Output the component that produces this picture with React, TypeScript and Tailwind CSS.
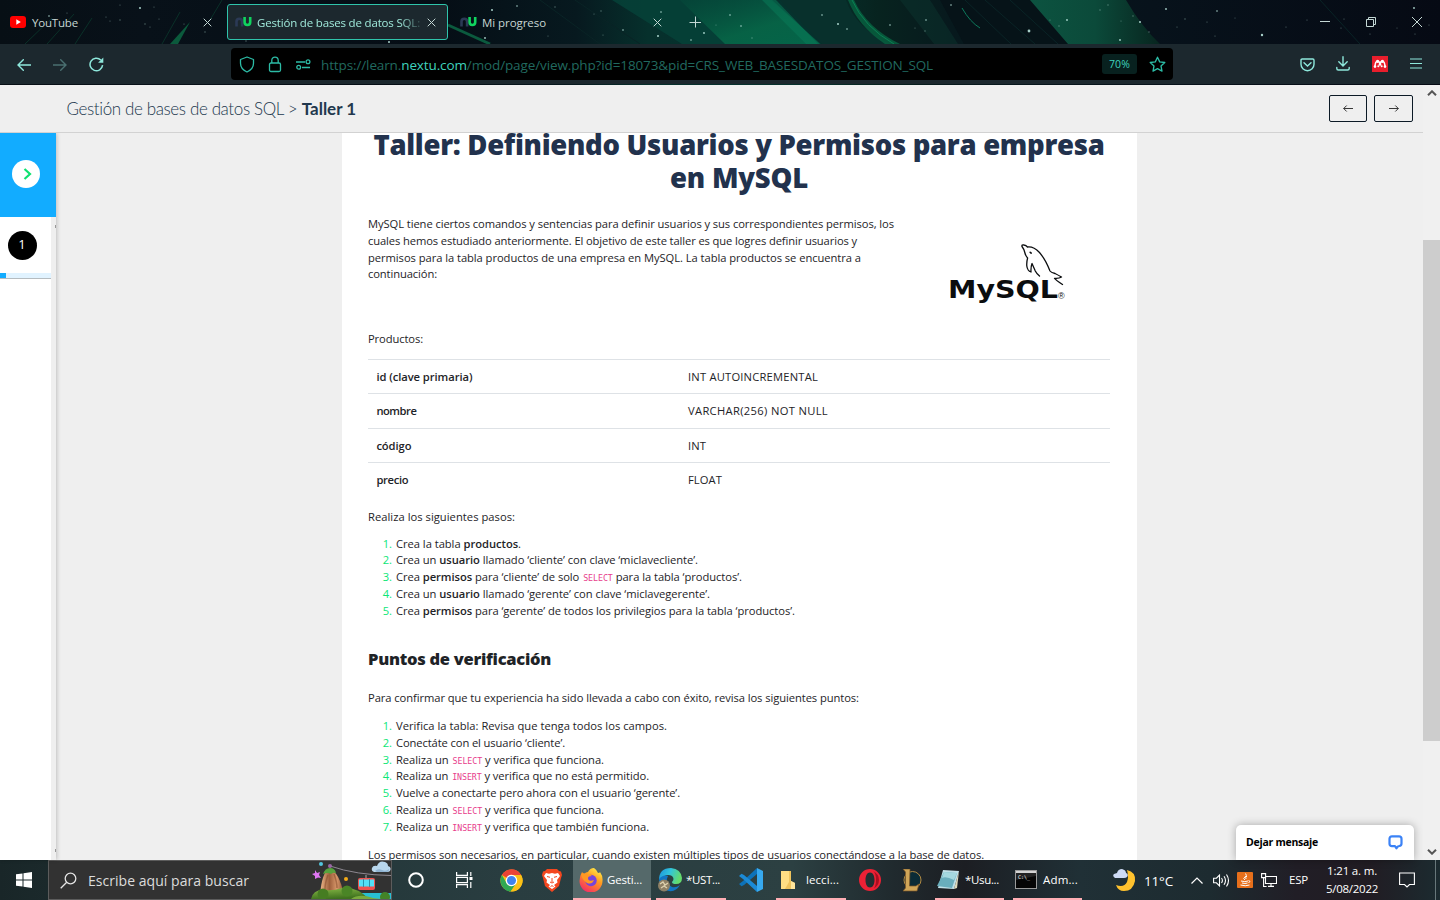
import { useLayoutEffect, useRef, type ReactNode } from 'react';

/** Single line of text whose tracking is computed so that it fills `w` pixels. */
function Fit({ w, className = '', children }: { w: number; className?: string; children: ReactNode }) {
  const ref = useRef<HTMLSpanElement>(null);
  useLayoutEffect(() => {
    const el = ref.current;
    if (!el) return;
    el.style.letterSpacing = '0px';
    const natural = el.getBoundingClientRect().width;
    const n = el.textContent?.length ?? 1;
    el.style.letterSpacing = `${(w - natural) / n}px`;
  }, [w]);
  return (
    <span ref={ref} className={`inline-block whitespace-pre ${className}`}>
      {children}
    </span>
  );
}

const Code = ({ children }: { children: string }) => (
  <code className="pl-px font-['DejaVu_Sans_Mono',monospace] text-[8.3px] text-[#e83e8c]">{children}</code>
);

const stars: [number, number, number][] = [
  [140, 8, 1], [120, 5, 0.6], [106, 17, 0.6], [110, 21, 0.6], [120, 20, 0.7], [145, 24, 0.7], [150, 27, 0.6], [159, 19, 0.6],
  [154, 7, 0.6], [205, 32, 0.7], [49, 16, 0.8], [67, 13, 0.6], [184, 24, 0.6], [389, 42, 1], [246, 41, 0.7], [492, 10, 1],
  [517, 6, 0.8], [555, 7, 0.7], [594, 14, 0.6], [601, 11, 0.7], [485, 38, 0.9], [548, 36, 0.6], [603, 35, 0.6], [623, 30, 0.8],
  [661, 12, 0.8], [658, 36, 1], [691, 40, 0.8], [704, 33, 0.9], [716, 25, 0.6], [730, 15, 0.8], [741, 26, 0.8], [752, 38, 0.7],
  [822, 15, 0.8], [838, 24, 1], [847, 29, 0.8], [890, 25, 0.8], [915, 28, 0.6], [925, 31, 0.7], [926, 20, 0.8], [951, 5, 0.8],
  [1029, 31, 1.4], [1050, 20, 0.6], [1067, 20, 0.9], [1059, 26, 0.7], [1100, 10, 0.7], [1108, 5, 0.7], [1121, 21, 0.6], [1140, 22, 1],
  [1133, 16, 0.7], [1149, 32, 0.7], [1120, 40, 0.9], [1166, 9, 0.9], [1185, 19, 0.7], [1177, 27, 0.6], [1217, 11, 0.8], [1207, 22, 0.6],
  [1262, 35, 1.2], [1215, 36, 0.6], [1286, 27, 0.6], [1307, 20, 0.6], [1344, 19, 0.6], [1341, 28, 0.6], [1414, 8, 0.9], [1397, 28, 0.5],
  [1370, 34, 0.6], [1415, 34, 0.6], [1429, 25, 0.6], [1235, 18, 0.5],
];

const Aurora = () => (
  <svg className="absolute inset-0" width="1440" height="85" viewBox="0 0 1440 85">
    <defs>
      <linearGradient id="sky" x1="0" x2="1440" y1="0" y2="0" gradientUnits="userSpaceOnUse">
        <stop offset="0" stopColor="#070f15" />
        <stop offset=".1" stopColor="#081119" />
        <stop offset=".3" stopColor="#050d15" />
        <stop offset=".4" stopColor="#07191f" />
        <stop offset=".45" stopColor="#06302c" />
        <stop offset=".56" stopColor="#06322e" />
        <stop offset=".61" stopColor="#07231f" />
        <stop offset=".66" stopColor="#07191d" />
        <stop offset=".8" stopColor="#07121b" />
        <stop offset="1" stopColor="#060a14" />
      </linearGradient>
      <linearGradient id="beam" x1="0" x2="1" y1="0" y2="1">
        <stop offset="0" stopColor="#05493a" stopOpacity=".6" />
        <stop offset=".6" stopColor="#076848" />
        <stop offset="1" stopColor="#046b4c" />
      </linearGradient>
      <linearGradient id="ray" x1="0" x2="1" y1="0" y2="0">
        <stop offset="0" stopColor="#0c5340" />
        <stop offset=".5" stopColor="#0b4a3a" />
        <stop offset="1" stopColor="#08251f" />
      </linearGradient>
    </defs>
    <rect width="1440" height="85" fill="url(#sky)" />
    <path d="M612 0H770L821 44H682z" fill="#064238" opacity=".85" />
    <path d="M680 0H772L820 44H725z" fill="url(#beam)" opacity=".85" />
    <path d="M762 0h14l42 44h-12z" fill="#0a7a58" opacity=".55" />
    <path d="M780 0h66q10 28 44 44h-68z" fill="#08302c" />
    <path d="M848 0h6q13 28 46 44h-15Q858 26 848 0z" fill="#076040" opacity=".85" />
    <path d="M852 0q12 27 42 44" stroke="#0a8054" fill="none" />
    <path d="M940 0h92l42 44h-110z" fill="#061318" />
    <path d="M1030 0h96q15 26 34 44h-92z" fill="url(#ray)" />
    <path d="M930 0l28 44h-24L900 0z" fill="#0b332d" opacity=".5" />
    <path d="M962 8q8 14 18 20" stroke="#0d7a5c" fill="none" />
    <path d="M190 22l-12 22h-8z" fill="#0b5a3c" />
    <path d="M222 0l-12 20M180 12l-18 32M52 18L25 44M74 14L47 44M92 18L75 44" stroke="#0a3028" />
    <path d="M448 25l42 19" stroke="#0b5a3e" strokeWidth="3" />
    <path d="M540 0l60 44M575 0l65 44M1010 0l48 44M985 0l50 44M965 0l46 44M1320 0l40 44" stroke="#0a2426" strokeWidth="1" />
    {stars.map(([x, y, r]) => (
      <circle key={`${x}-${y}`} cx={x} cy={y} r={r} fill="#b9e4dc" opacity={r > 0.75 ? 0.9 : 0.45} />
    ))}
  </svg>
);

const NuIcon = () => (
  <svg width="17" height="10" viewBox="0 0 17 10" fill="none" strokeWidth="2.6" className="shrink-0">
    <path d="M1.5 9.5V4.500a2.800 2.800 0 0 1 5.600 0v5" stroke="#2b3a55" />
    <path d="M9.600 0v5.200a2.800 2.800 0 0 0 5.600 0V0" stroke="#10d45f" />
  </svg>
);

const CloseX = ({ className = '' }: { className?: string }) => (
  <svg width="9" height="9" viewBox="0 0 9 9" stroke="#c4d8d5" strokeWidth="1" className={`shrink-0 ${className}`}>
    <path d="M.7.7l7.600 7.600M8.300.7L.7 8.300" />
  </svg>
);

function TabBar() {
  return (
    <div className="relative flex h-11 text-[11.5px] text-[#c6d6d4]">
      <div className="flex w-[227px] items-center pl-2.5">
        <svg width="16" height="12" viewBox="0 0 16 12" className="shrink-0">
          <rect width="16" height="12" rx="3" fill="#f00" />
          <path d="M6.300 3.300v5.400L10.800 6z" fill="#fff" />
        </svg>
        <Fit w={46} className="ml-1.5 mt-0.5">YouTube</Fit>
        <CloseX className="ml-auto mr-[15px]" />
      </div>
      <div className="mt-1 flex h-9 w-[221px] items-center rounded-[3px] border border-[#2fc4ab] bg-[#1c282e] pl-[7px]">
        <NuIcon />
        <div className="ml-[5px] mt-0.5 flex w-[168px] overflow-hidden text-[#9fe8da] [mask-image:linear-gradient(90deg,#000_85%,transparent_100%)]">
          <Fit w={163}>Gestión de bases de datos SQL:</Fit>
        </div>
        <CloseX className="ml-[2px]" />
      </div>
      <div className="flex w-[226px] items-center pl-3">
        <NuIcon />
        <Fit w={64} className="ml-[5px] mt-0.5">Mi progreso</Fit>
        <CloseX className="ml-auto mr-[12px]" />
      </div>
      <div className="flex w-[42px] items-center justify-center">
        <svg width="12" height="12" stroke="#c4d8d5" strokeWidth="1"><path d="M6.500 .5v11M.5 6.500h12" /></svg>
      </div>
      <div className="ml-auto flex items-center pr-[18px]">
        <svg width="10" height="10" stroke="#c4d8d5"><path d="M0 4.500h10" /></svg>
        <svg width="10" height="10" fill="none" stroke="#c4d8d5" className="ml-[36px]">
          <path d="M.5 2.500h7v7h-7zM2.500 2.500v-2h7v7h-2" />
        </svg>
        <svg width="10" height="10" stroke="#c4d8d5" className="ml-[36px]"><path d="M0 0l10 10M10 0L0 10" /></svg>
      </div>
    </div>
  );
}

function Toolbar() {
  return (
    <div className="relative flex h-10 items-center bg-[#1c282e]">
      <svg width="14" height="12" viewBox="0 0 14 12" fill="none" stroke="#8ee8dc" strokeWidth="1.4" className="ml-[17px] mt-px">
        <path d="M14 6H1M6.300.7L1 6l5.300 5.300" strokeLinecap="round" />
      </svg>
      <svg width="14" height="12" viewBox="0 0 14 12" fill="none" stroke="#4a6f70" strokeWidth="1.4" className="ml-[22px] mt-px">
        <path d="M0 6h13M7.700.7L13 6l-5.300 5.300" strokeLinecap="round" />
      </svg>
      <svg width="15" height="15" viewBox="0 0 15 15" fill="none" stroke="#8ee8dc" strokeWidth="1.5" className="ml-[22px] mt-px">
        <path d="M13.600 8.200A6.300 6.300 0 1 1 11.800 3" />
        <path d="M14.300.6v5.200H9.100z" fill="#8ee8dc" stroke="none" />
      </svg>
      <div className="ml-[127px] flex h-8 w-[942px] items-center rounded-[4px] bg-black">
        <svg width="16" height="17" viewBox="0 0 16 17" fill="none" stroke="#2cbca6" strokeWidth="1.3" className="ml-2">
          <path d="M8 1l6.500 2.500v3.800c0 4-2.700 7-6.500 8.700C4.200 14.300 1.500 11.300 1.500 7.300V3.500z" strokeLinejoin="round" />
        </svg>
        <svg width="14" height="17" viewBox="0 0 14 17" fill="none" stroke="#2cbca6" strokeWidth="1.3" className="ml-[13px]">
          <rect x="1.500" y="7" width="11" height="8.500" rx="1.500" />
          <path d="M3.800 7V4.300a3.200 3.200 0 0 1 6.400 0V7" />
        </svg>
        <svg width="15" height="11" viewBox="0 0 15 11" fill="none" stroke="#2cbca6" strokeWidth="1.300" className="ml-[14px]">
          <path d="M0 3h9M6 8.500h8" />
          <circle cx="12" cy="2.700" r="1.900" />
          <circle cx="2.700" cy="8.300" r="1.900" />
        </svg>
        <Fit w={612} className="ml-[10px] mt-0.5 text-[13.5px] text-[#21695f]">
          https://learn.<span className="text-[#3fd3bd]">nextu.com</span>/mod/page/view.php?id=18073&amp;pid=CRS_WEB_BASESDATOS_GESTION_SQL
        </Fit>
        <div className="ml-auto flex h-5 w-[35px] items-center justify-center rounded-[3px] bg-[#08211f] pt-0.5 text-[10.5px] text-[#3fd3bd]">
          <Fit w={21}>70%</Fit>
        </div>
        <svg width="17" height="17" viewBox="0 0 17 17" fill="none" stroke="#2cbca6" strokeWidth="1.300" strokeLinejoin="round" className="ml-[12px] mr-[7px]">
          <path d="M8.500 1.200l2.200 4.700 5.100.6-3.800 3.500 1 5.100-4.500-2.500L4 15.100l1-5.100L1.200 6.500l5.100-.6z" />
        </svg>
      </div>
      <svg width="15" height="14" viewBox="0 0 15 14" fill="none" stroke="#8ee8dc" strokeWidth="1.400" className="ml-[127px] mt-px">
        <path d="M2.200 1h10.600q1.200 0 1.200 1.200v4A6.500 6.500 0 0 1 1 6.200v-4Q1 1 2.200 1z" />
        <path d="M4 4.800l3.500 3.300L11 4.800" strokeLinecap="round" />
      </svg>
      <svg width="14" height="15" viewBox="0 0 14 15" fill="none" stroke="#8ee8dc" strokeWidth="1.400" strokeLinecap="round" className="ml-[21px] -mt-px">
        <path d="M7 .7v9M2.800 5.800L7 9.900l4.200-4.100M.8 11.500v1q0 1.500 1.500 1.500h9.400q1.500 0 1.500-1.500v-1" />
      </svg>
      <svg width="16" height="16" viewBox="0 0 16 16" className="ml-[22px]">
        <rect width="16" height="16" fill="#e81e2c" />
        <path d="M3 10.500Q3.200 5.200 5.500 5.200T8 9q.3-3.800 2.500-3.800T13 10.500" stroke="#fff" strokeWidth="1.500" fill="none" />
        <circle cx="5.600" cy="5.300" r="1.600" fill="#fff" />
        <circle cx="10.400" cy="5.300" r="1.600" fill="#fff" />
        <circle cx="3" cy="10.600" r="1.300" fill="#fff" />
        <circle cx="6.300" cy="10.200" r="1" fill="#fff" />
        <circle cx="9.700" cy="10.200" r="1" fill="#fff" />
        <circle cx="8" cy="8.400" r="1.300" fill="#fff" />
        <circle cx="13" cy="10.600" r="1.300" fill="#fff" />
      </svg>
      <svg width="12" height="11" stroke="#8ee8dc" strokeWidth="1.200" className="ml-[22px] -mt-px"><path d="M0 1h12M0 5.500h12M0 10h12" /></svg>
    </div>
  );
}

const MySqlLogo = () => (
  <svg width="120" height="62" viewBox="0 0 120 62" className="text-[#0b0d0f]">
    <g fill="none" stroke="currentColor" strokeWidth="1.300" strokeLinecap="round" strokeLinejoin="round" transform="translate(5 1)">
      <path d="M84.500 33q-3-2.500-4.200-5l-3.300-7.500q-1.300 3.500-1 8.500-3.500-1-4.200-6-.3-4 .8-8-2-2-2.800-5.500Q69 6 67 3.500 66.500 1.500 69 2q2 .2 3.500 2 6-.8 12 5.500 6 7 10.500 18.500 1 1.500 5 2.500 3 1.500 6.500 3.500-2.500 1.700-7 1.300 1.500 1.800 8 6.200" />
      <path d="M75.200 9.300l1 .8" strokeWidth="1.600" />
    </g>
    <text x="-2" y="56" textLength="110" lengthAdjust="spacingAndGlyphs" fill="currentColor" className="font-['DejaVu_Sans'] text-[25px] font-bold">MySQL</text>
    <text x="108" y="57" fill="currentColor" className="font-['Liberation_Sans'] text-[9px]">®</text>
  </svg>
);

const fields: [string, number, string, number][] = [
  ['id (clave primaria)', 96, 'INT AUTOINCREMENTAL', 130],
  ['nombre', 40, 'VARCHAR(256) NOT NULL', 140],
  ['código', 35, 'INT', 18],
  ['precio', 32, 'FLOAT', 34],
];

const steps: [number, ReactNode][] = [
  [125, <>Crea la tabla <b>productos</b>.</>],
  [302, <>Crea un <b>usuario</b> llamado ‘cliente’ con clave ‘miclavecliente’.</>],
  [346, <>Crea <b>permisos</b> para ‘cliente’ de solo <Code>SELECT</Code> para la tabla ‘productos’.</>],
  [314, <>Crea un <b>usuario</b> llamado ‘gerente’ con clave ‘miclavegerente’.</>],
  [399, <>Crea <b>permisos</b> para ‘gerente’ de todos los privilegios para la tabla ‘productos’.</>],
];

const checks: [number, ReactNode][] = [
  [271, <>Verifica la tabla: Revisa que tenga todos los campos.</>],
  [169, <>Conectáte con el usuario ‘cliente’.</>],
  [208, <>Realiza un <Code>SELECT</Code> y verifica que funciona.</>],
  [253, <>Realiza un <Code>INSERT</Code> y verifica que no está permitido.</>],
  [284, <>Vuelve a conectarte pero ahora con el usuario ‘gerente’.</>],
  [208, <>Realiza un <Code>SELECT</Code> y verifica que funciona.</>],
  [253, <>Realiza un <Code>INSERT</Code> y verifica que también funciona.</>],
];

const Steps = ({ items }: { items: [number, ReactNode][] }) => (
  <ol>
    {items.map(([w, text], i) => (
      <li key={i} className="flex h-[16.8px]">
        <span className="w-[24px] text-right text-[#0be676]">{i + 1}.</span>
        <Fit w={w} className="ml-1">{text}</Fit>
      </li>
    ))}
  </ol>
);

function Article() {
  return (
    <article className="ml-[286px] h-[727px] w-[795px] overflow-hidden bg-white pl-[26px] pr-[27px] text-[11.2px] leading-[16.8px] text-[#1e2327] [&_b]:font-semibold">
      <h1 className="-mt-[5px] flex flex-col items-center text-[27.5px] font-extrabold leading-[33px] text-[#22324d]">
        <Fit w={731}>Taller: Definiendo Usuarios y Permisos para empresa</Fit>
        <Fit w={138}>en MySQL</Fit>
      </h1>
      <div className="mt-[22px] flex h-[115px]">
        <p className="flex w-[582px] flex-col items-start">
          <Fit w={526}>MySQL tiene ciertos comandos y sentencias para definir usuarios y sus correspondientes permisos, los</Fit>
          <Fit w={489}>cuales hemos estudiado anteriormente. El objetivo de este taller es que logres definir usuarios y</Fit>
          <Fit w={493}>permisos para la tabla productos de una empresa en MySQL. La tabla productos se encuentra a</Fit>
          <Fit w={69}>continuación:</Fit>
        </p>
        <div className="pt-[26px]"><MySqlLogo /></div>
      </div>
      <p className="flex h-7"><Fit w={55}>Productos:</Fit></p>
      <div>
        {fields.map(([name, nw, type, tw]) => (
          <div key={name} className="flex h-[34.4px] items-center border-t border-[#dee2e6] pl-[8.4px] pt-px">
            <div className="w-[311.600px]"><Fit w={nw} className="font-semibold">{name}</Fit></div>
            <Fit w={tw}>{type}</Fit>
          </div>
        ))}
      </div>
      <p className="mt-3 flex h-[27px]"><Fit w={147}>Realiza los siguientes pasos:</Fit></p>
      <Steps items={steps} />
      <h2 className="mt-[28px] flex h-[42.500px] text-[16.500px] font-extrabold leading-[21px]"><Fit w={183}>Puntos de verificación</Fit></h2>
      <p className="flex h-7"><Fit w={491}>Para confirmar que tu experiencia ha sido llevada a cabo con éxito, revisa los siguientes puntos:</Fit></p>
      <Steps items={checks} />
      <p className="mt-[11px] flex"><Fit w={616}>Los permisos son necesarios, en particular, cuando existen múltiples tipos de usuarios conectándose a la base de datos.</Fit></p>
    </article>
  );
}

function Sidebar() {
  return (
    <aside className="flex w-14 flex-col bg-[#efefef] shadow-[1px_0_4px_rgba(0,0,0,.2)]">
      <div className="flex h-[84px] items-center justify-center bg-[#12acff] pr-1">
        <div className="mt-[-2px] flex size-7 items-center justify-center rounded-full bg-white">
          <svg width="9" height="12" fill="none" stroke="#10e070" strokeWidth="2.200" className="ml-[2px]"><path d="M1.500 1L7 6l-5.500 5" /></svg>
        </div>
      </div>
      <div className="flex flex-1 justify-between">
        <div className="w-[51px] bg-white">
          <div className="flex h-14 items-center justify-center pr-[7px]">
            <div className="flex size-[29px] items-center justify-center rounded-full bg-black text-[13px] text-white">1</div>
          </div>
          <div className="h-[6px] border-b border-[#b5bcc0] bg-[#e1f3ff]"><div className="h-[5px] w-1.5 bg-[#12acff]" /></div>
        </div>
        <div className="flex w-px flex-col justify-between pb-2 pt-2">
          <div className="h-[3px] bg-[#999]" />
          <div className="h-[3px] bg-[#999]" />
        </div>
      </div>
    </aside>
  );
}

const NavButton = ({ d, wide = false }: { d: string; wide?: boolean }) => (
  <div className={`flex h-[27px] items-center justify-center rounded-[2px] border border-[#0c1a26] ${wide ? 'w-[39px]' : 'w-[38px]'}`}>
    <svg width="10" height="7" fill="none" stroke="#222" strokeWidth=".9"><path d={d} /></svg>
  </div>
);

function Page() {
  return (
    <div className="relative flex h-[775px] bg-[#efefef]">
      <div className="flex w-[1423px] flex-col">
        <header className="relative z-10 flex h-12 items-center border-b border-[#d2d2d2] bg-[#efefef] pl-[66.500px] pr-[10px] font-['Lato',sans-serif] text-[17px] text-[#22384e]">
          <Fit w={231} className="font-light">Gestión de bases de datos SQL &gt;</Fit>
          <Fit w={54.5} className="ml-[4.500px] font-bold">Taller 1</Fit>
          <div className="ml-auto flex gap-[7px]">
            <NavButton d="M10 3.500H.7M3.700.5l-3 3 3 3" />
            <NavButton wide d="M0 3.500h9.300M6.300.5l3 3-3 3" />
          </div>
        </header>
        <div className="flex h-[727px]">
          <Sidebar />
          <Article />
        </div>
      </div>
      <div className="flex w-[17px] flex-col items-center bg-[#f0f0f0]">
        <svg width="10" height="6" fill="none" stroke="#555" strokeWidth="2" className="mt-[5px]"><path d="M1 5.300l4-4 4 4" /></svg>
        <div className="mt-36 h-[501px] w-[17px] bg-[#cdcdcd]" />
        <svg width="10" height="6" fill="none" stroke="#555" strokeWidth="2" className="mt-auto mb-[5px]"><path d="M1 .7l4 4 4-4" /></svg>
      </div>
      <div className="absolute bottom-0 right-[26px] flex h-[35px] w-[178px] items-center justify-between rounded-t-[5px] bg-white pl-2.5 pr-[11px] text-[10.5px] font-bold text-black shadow-[0_0_8px_rgba(0,0,0,.3)]">
        <Fit w={72} className="pt-px">Dejar mensaje</Fit>
        <svg width="15" height="15" viewBox="0 0 15 15" fill="none" stroke="#3b82f6" strokeWidth="2.200" strokeLinejoin="round">
          <path d="M4 1.300h7q2.500 0 2.500 2.500v4.700q0 2.300-2.200 2.500-1.800.2-2.800 2.300L7 11.200H4q-2.500 0-2.500-2.500V3.800q0-2.500 2.500-2.500z" />
        </svg>
      </div>
    </div>
  );
}

const SearchArt = () => (
  <svg width="80" height="38" viewBox="0 0 80 38">
    <defs>
      <linearGradient id="rock"><stop stopColor="#f0b88a" /><stop offset=".4" stopColor="#9e603c" /><stop offset=".7" stopColor="#d8976a" /><stop offset="1" stopColor="#854d30" /></linearGradient>
      <linearGradient id="hill" y2="1" x2=".3"><stop stopColor="#8cbd48" /><stop offset="1" stopColor="#3e711e" /></linearGradient>
    </defs>
    <path d="M19 5Q45 14 80 14.500" stroke="#8c8790" fill="none" />
    <circle cx="10" cy="3" r="2" fill="#52c7de" /><circle cx="19" cy="5" r="2" fill="#9b68a6" />
    <path d="M4 9l2 3 3-1-1 3 2 3-3-.5-3 1.500v-3l-3-2 3-1z" fill="#df76f2" />
    <path d="M9 34Q11 11 18 8q10 2 15 26z" fill="url(#rock)" />
    <path d="M17 14q-3 8-3 14M23 13q3 8 3 14" stroke="#8a5030" strokeWidth="1.500" fill="none" opacity=".6" />
    <path d="M12 13q2-6 7-6t6 5q-3-1-5 1-3-2-8 0z" fill="#57a33d" />
    <circle cx="35" cy="18" r="2" fill="#f5ac18" />
    <path d="M44 32h36v6H44z" fill="#28bfd4" />
    <path d="M0 38Q2 28 14 29q8 1 17-2 14-2 27 11z" fill="url(#hill)" />
    <circle cx="12" cy="33" r="5.500" fill="#467d22" /><circle cx="36" cy="30" r="5.500" fill="#4a8526" />
    <path d="M40 38q8-6 22-1l8 1z" fill="#7aa93d" /><circle cx="74" cy="36" r="5" fill="#438327" />
    <path d="M55 14v4" stroke="#aaa" /><rect x="47" y="17" width="17" height="12" rx="2" fill="#ef5250" />
    <path d="M48 18.500h15v7H48z" fill="#54e0f7" /><path d="M52.500 18v8M58.500 18v8" stroke="#2b93ae" />
    <path d="M63 11q-3-1-2-4t5-2q2-6 8-4 3 1 3 4 4 1 2 5-1 1-3 1z" fill="#b9d7ed" />
    <path d="M64 10q3-3 7-1t7-1q0 3-3 3H66z" fill="#8fb3d2" />
  </svg>
);

const Task = ({ width, label, labelWidth, active = false, children }: { width: string; label: string; labelWidth: number; active?: boolean; children: ReactNode }) => (
  <div className={`flex h-10 items-center border-b-2 border-[#ffaeb4] pt-px ${width} ${active ? 'bg-[#55696a]' : ''}`}>
    {children}
    <Fit w={labelWidth}>{label}</Fit>
  </div>
);

function Taskbar() {
  return (
    <footer className="flex h-10 items-center overflow-hidden bg-[linear-gradient(90deg,#192628_0,#203234_13%,#293d40_35%,#2c4042_55%,#202a2e_62%,#1c1e23_67%,#203036_75%,#1d2b30_84%,#211e26_90%,#211c23_95%,#1c2b30_100%)] text-[11.5px] text-white">
      <div className="flex w-12 justify-center">
        <svg width="16" height="16" fill="#fff"><path d="M0 2.300L6.500 1.400v6.100H0zM7.500 1.200L16 0v7.500H7.500zM0 8.500h6.500v6.100L0 13.700zM7.500 8.500H16V16l-8.500-1.200z" /></svg>
      </div>
      <div className="flex h-10 w-[344px] items-center border border-[#5c5c5c] bg-[#323232] pl-[11px]">
        <svg width="17" height="17" fill="none" stroke="#e4e4e4" strokeWidth="1.300"><circle cx="10.500" cy="6.500" r="5.300" /><path d="M6.700 10.300L.7 16.300" /></svg>
        <Fit w={161} className="ml-[11px] text-[14px] text-[#dcdcdc]">Escribe aquí para buscar</Fit>
        <div className="ml-auto"><SearchArt /></div>
      </div>
      <div className="flex w-12 justify-center"><svg width="16" height="16" fill="none" stroke="#fff" strokeWidth="2"><circle cx="8" cy="8" r="6.800" /></svg></div>
      <div className="flex w-12 justify-center">
        <svg width="17" height="16" fill="none" stroke="#fff" strokeWidth="1.200"><path d="M.6 0v3.400h10.800V0M.6 16v-3.400h10.800V16M.6 5.400h10.800v5.200H.6zM14.800 0v4M14.800 10v6" /><path d="M13.500 5h3v3h-3z" fill="#fff" stroke="none" /></svg>
      </div>
      <div className="flex w-[46px] justify-center">
        <svg width="23" height="23" viewBox="0 0 24 24">
          <circle cx="12" cy="12" r="11.500" fill="#fbc116" />
          <path d="M12 12L2 6.200A11.500 11.500 0 0 1 22 6.200H12z" fill="#ea4335" />
          <path d="M12 12L7 14.900 2 6.200a11.500 11.500 0 0 0 9 17.300l6-8.600z" fill="#30a853" />
          <path d="M12 6.500H22.200a11.500 11.500 0 0 1-10.700 17L17 15z" fill="#fbc116" />
          <circle cx="12" cy="12" r="6" fill="#fff" /><circle cx="12" cy="12" r="4.700" fill="#3f83ee" />
        </svg>
      </div>
      <div className="flex w-[39px] justify-center pr-1">
        <svg width="20" height="23" viewBox="0 0 20 23">
          <path d="M5 0h10l2 2 2 .5L20 6l-1 3-2 8-7 6-7-6L1 9 0 6l1-3.500L3 2z" fill="#f4471f" />
          <path d="M4 4l3 .7L10 4l3 .7L16 4l2 3-3 4 .5 2.500L12 16l1.500 1.500L10 20l-3.500-2.500L8 16l-3.500-2.500L5 11 2 7z" fill="#fff" />
          <path d="M5 7.500l3 .8M15 7.500l-3 .8M10 9v4M8 13l2 1 2-1M8.500 17.500l1.500-.8 1.500.8" stroke="#f4471f" fill="none" />
        </svg>
      </div>
      <Task width="w-[78px] pl-1.5" label="Gesti..." labelWidth={35} active>
        <svg width="24" height="24" viewBox="0 0 24 24" className="mr-1">
          <defs><linearGradient id="fx" x1=".8" x2=".2" y2="1"><stop stopColor="#fff04b" /><stop offset=".4" stopColor="#ff9a1f" /><stop offset="1" stopColor="#f5246a" /></linearGradient></defs>
          <path d="M15 0q3 2 4 5 2 0 2-1 3 4 2.500 9A11.500 11.500 0 0 1 .5 13Q.5 8 3 4l2 2q2-2 4-2 2-4 6-4z" fill="url(#fx)" />
          <circle cx="12" cy="12.500" r="5.700" fill="#7544dc" />
          <path d="M2 6q4-2 6 1 3-1 5 1-4 0-4 2 0 4 6 2-2 5-7 3-5-3-6-9z" fill="#ff9823" />
        </svg>
      </Task>
      <div className="w-[5px]" />
      <Task width="w-[70px] pl-px" label="*UST..." labelWidth={34}>
        <svg width="26" height="25" viewBox="0 0 26 25" className="mr-[3px]">
          <defs><linearGradient id="eg" y2=".3"><stop stopColor="#1b91dc" /><stop offset=".5" stopColor="#31c4dc" /><stop offset="1" stopColor="#64db6d" /></linearGradient></defs>
          <path d="M2 13Q2 1 14 1q10 1 11 10 0 6-6 6-4 0-4-2 3-3 0-6Q9 6 2 13z" fill="url(#eg)" />
          <path d="M2 12q4-5 9-3-4 7 4 11 4 1 8-2-4 7-11 6Q2 22 2 12z" fill="#1275c4" />
          <circle cx="7" cy="18.500" r="6" fill="#8e8065" /><path d="M3 17l3-2 2 3 3-2M4 21l3-2 3 2" stroke="#ded1ae" strokeWidth="1.300" fill="none" />
        </svg>
      </Task>
      <div className="flex w-[50px] justify-center">
        <svg width="25" height="24" viewBox="0 0 25 24">
          <path d="M0 16l2.500 2.300L5 17 18 6V0L4 13z" fill="#0d72b9" />
          <path d="M0 8l2.500-2.300L5 7l13 11v6L4 11z" fill="#1b8ad6" />
          <path d="M18 0l6 3v18l-6 3z" fill="#37a9ef" />
        </svg>
      </div>
      <Task width="w-[70px] pl-[5px]" label="lecci..." labelWidth={33}>
        <svg width="14" height="20" viewBox="0 0 14 20" className="mr-[11px]"><path d="M0 1h10v10l4 2v6H0z" fill="#efc45d" /><path d="M0 1h8v11l-4 7H0z" fill="#ffdf84" /><path d="M10 11l4 2v6h-4z" fill="#ffe59b" /></svg>
      </Task>
      <div className="flex w-[48px] justify-center">
        <svg width="22" height="22" viewBox="0 0 22 22"><path fillRule="evenodd" d="M11 0a11 11 0 1 0 0 22 11 11 0 0 0 0-22zm0 3.500c3 0 4.500 3.500 4.500 7.500s-1.500 7.500-4.500 7.500S6.500 15 6.500 11 8 3.500 11 3.500z" fill="#ec2135" /><path d="M14 2q6 3 6 9t-6 9q3-2 3-9t-3-9z" fill="#a90e20" /></svg>
      </div>
      <div className="flex w-[41px] justify-center pr-[7px]">
        <svg width="21" height="23" viewBox="0 0 21 23"><circle cx="11.500" cy="11" r="8.500" fill="#0b2b36" stroke="#b38a42" /><path d="M2 0h7l-.5 17H15l3-2-2 7H2l2.500-3V3z" fill="#d0a658" stroke="#7a5427" strokeWidth=".7" /></svg>
      </div>
      <Task width="w-[69px] pl-px" label="*Usu..." labelWidth={34}>
        <svg width="24" height="22" viewBox="0 0 24 22" className="mr-[5px]"><path d="M7 1l16 1-5 18-16-1z" fill="#c1e0e8" /><path d="M8 3l13 1-5 15L1 17z" fill="#69aebd" /><path d="M8 3l13 1-3 7Q10 7 6 9z" fill="#a5d8df" /><path d="M23 2l-2 17-3 1z" fill="#ddd9bc" /></svg>
      </Task>
      <div className="w-[9px]" />
      <Task width="w-[69px] pl-[2px]" label="Adm..." labelWidth={35}>
        <svg width="22" height="19" viewBox="0 0 22 19" className="mr-1.5"><rect x=".5" y=".5" width="21" height="18" fill="#050505" stroke="#9a9a9a" /><path d="M1 2h20" stroke="#d4d4d4" strokeWidth="2" /><text x="3" y="9" className="font-['DejaVu_Sans_Mono'] text-[5px]" fill="#fff">C:\_</text><path d="M1 10L21 6V3H1z" fill="#fff" opacity=".12" /></svg>
      </Task>
      <svg width="23" height="23" viewBox="0 0 23 23" className="ml-[31px]">
        <path d="M14 1q9 2 8 11-2 10-11 10-6 0-8-6 8 3 11-3 2-5 0-12z" fill="#ffc22e" /><path d="M2 9q-3-2-1-4l3-1q1-4 5-4 4 1 4 4 3 1 1 4-1 1-3 1z" fill="#cedbf5" />
      </svg>
      <Fit w={29} className="ml-2 mt-[2px] text-[13.5px]">11°C</Fit>
      <svg width="12" height="7" fill="none" stroke="#fff" strokeWidth="1.200" className="ml-[18px]"><path d="M.5 6.500L6 1l5.500 5.500" /></svg>
      <svg width="17" height="15" viewBox="0 0 17 15" fill="none" stroke="#fff" strokeWidth="1.100" className="ml-[10px]"><path d="M.6 5.200h2.800L6.500 2v11L3.400 9.800H.6zM8.500 5q1.800 2.500 0 5M11 3.200q3 4.300 0 8.600M13.500 1.500q4 6 0 12" /></svg>
      <svg width="16" height="16" viewBox="0 0 16 16" className="ml-[7px]"><rect width="16" height="16" rx="1" fill="#e76f1b" /><path d="M8.500 1.500q2 2-.5 3.500t0 3M10 4q-2 1-1 3M4 9q4 1.200 7 0M5 11q3 1 5.500 0M3.500 13q5 1.500 9 0M11.500 8.500q3 .5 0 2.500" stroke="#fff" fill="none" /></svg>
      <svg width="16" height="14" viewBox="0 0 16 14" fill="none" stroke="#fff" strokeWidth="1.100" className="ml-2"><path d="M4.500 3.500h11v7h-11zM10 10.500v3M7 13.400h6M.6.600h4v4h-4zM2.600 4.600v9h3" /></svg>
      <Fit w={19} className="ml-3">ESP</Fit>
      <div className="ml-[17px] flex w-[54px] flex-col items-center leading-[18px]"><Fit w={50}>1:21 a. m.</Fit><Fit w={52}>5/08/2022</Fit></div>
      <svg width="16" height="17" viewBox="0 0 16 17" fill="none" stroke="#fff" strokeWidth="1.100" className="ml-5"><path d="M.6 1h14.800v11.500h-4.900L8 15l-2.500-2.500H.6z" /></svg>
      <div className="ml-auto mr-1 h-10 w-px bg-[#68777a]" />
    </footer>
  );
}

export default function App() {
  return (
    <div className="h-[900px] w-[1440px] overflow-hidden font-['Open_Sans',sans-serif]">
      <div className="relative h-[85px]">
        <Aurora />
        <TabBar />
        <Toolbar />
      </div>
      <Page />
      <Taskbar />
    </div>
  );
}
